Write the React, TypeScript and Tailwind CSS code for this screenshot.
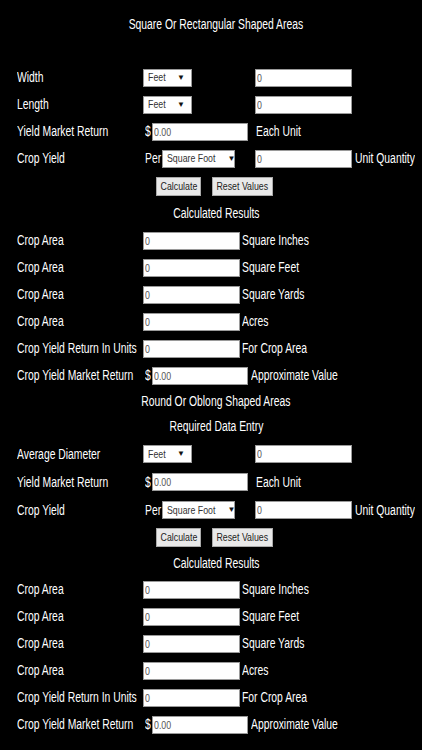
import React from "react";

// the screenshot's type is squeezed sideways, so every text run is narrowed
function T({
  children,
  center = false,
  small = false,
}: {
  children: React.ReactNode;
  center?: boolean;
  small?: boolean;
}) {
  return (
    <span
      className={`inline-block whitespace-nowrap ${small ? "scale-x-[0.8]" : "scale-x-[0.74]"} ${
        center ? "origin-center" : "origin-left"
      }`}
    >
      {children}
    </span>
  );
}

function Box({ value = "0", w = "w-[97px]" }: { value?: string; w?: string }) {
  return (
    <div
      className={`${w} h-[18px] shrink-0 border border-[#9a9a9a] bg-white pl-[1px] text-[11px] leading-[16px] text-[#555]`}
    >
      <T small>{value}</T>
    </div>
  );
}

function Pick({ text, w }: { text: string; w: string }) {
  return (
    <div
      className={`${w} flex h-[18px] shrink-0 items-center justify-between border border-[#9a9a9a] bg-white pl-[4px] pr-[6px] text-[11px] text-[#333]`}
    >
      <T small>{text}</T>
      <span className="text-[8px] text-[#111]">▼</span>
    </div>
  );
}

function Row({ label, h = "h-[27px]", children }: { label: string; h?: string; children: React.ReactNode }) {
  return (
    <div className={`flex ${h} items-center`}>
      <div className="w-[126px] shrink-0">
        <T>{label}</T>
      </div>
      <div className="flex items-center">{children}</div>
    </div>
  );
}

function Heading({ children, h }: { children: React.ReactNode; h: string }) {
  return (
    <div className={`flex ${h} items-center justify-center pl-[10px]`}>
      <T center>{children}</T>
    </div>
  );
}

function Buttons({ h }: { h: string }) {
  const btn =
    "flex h-[19px] items-center justify-center border border-[#aaa] bg-[#e9e9e9] text-[11px] text-[#222]";
  return (
    <div className={`flex ${h} items-center justify-center gap-[11px] pl-[7px]`}>
      <div className={`${btn} w-[45px]`}>
        <T center small>
          Calculate
        </T>
      </div>
      <div className={`${btn} w-[61px]`}>
        <T center small>
          Reset Values
        </T>
      </div>
    </div>
  );
}

function Results() {
  const units = ["Square Inches", "Square Feet", "Square Yards", "Acres"];
  return (
    <>
      {units.map((u) => (
        <Row key={u} label="Crop Area">
          <Box />
          <span className="ml-[2px]">
            <T>{u}</T>
          </span>
        </Row>
      ))}
      <Row label="Crop Yield Return In Units">
        <Box />
        <span className="ml-[2px]">
          <T>For Crop Area</T>
        </span>
      </Row>
      <Row label="Crop Yield Market Return">
        <span className="ml-[2px] w-[7px]">
          <T>$</T>
        </span>
        <Box value="0.00" w="w-[96px]" />
        <span className="ml-[3px]">
          <T>Approximate Value</T>
        </span>
      </Row>
    </>
  );
}

function Inputs({ first, h }: { first: string[]; h: string }) {
  return (
    <>
      {first.map((f) => (
        <Row key={f} label={f} h={h}>
          <Pick text="Feet" w="w-[49px]" />
          <div className="ml-[63px]">
            <Box />
          </div>
        </Row>
      ))}
      <Row label="Yield Market Return" h={h}>
        <span className="ml-[2px] w-[7px]">
          <T>$</T>
        </span>
        <Box value="0.00" w="w-[96px]" />
        <span className="ml-[8px]">
          <T>Each Unit</T>
        </span>
      </Row>
      <Row label="Crop Yield" h={h}>
        <span className="ml-[2px] w-[17px]">
          <T>Per</T>
        </span>
        <Pick text="Square Foot" w="w-[73px]" />
        <div className="ml-[20px]">
          <Box />
        </div>
        <span className="ml-[3px]">
          <T>Unit Quantity</T>
        </span>
      </Row>
    </>
  );
}

export default function App() {
  return (
    <div className="h-[750px] w-[422px] overflow-hidden bg-black px-[17px] text-[14px] text-white font-['Liberation_Sans',Arial,sans-serif]">
      <Heading h="h-[48px]">Square Or Rectangular Shaped Areas</Heading>
      <div className="h-[16px]" />
      <Inputs first={["Width", "Length"]} h="h-[27px]" />
      <Buttons h="h-[28px]" />
      <Heading h="h-[27px]">Calculated Results</Heading>
      <Results />
      <Heading h="h-[24px]">Round Or Oblong Shaped Areas</Heading>
      <Heading h="h-[27px]">Required Data Entry</Heading>
      <Inputs first={["Average Diameter"]} h="h-[28px]" />
      <Buttons h="h-[26px]" />
      <Heading h="h-[26px]">Calculated Results</Heading>
      <Results />
    </div>
  );
}
